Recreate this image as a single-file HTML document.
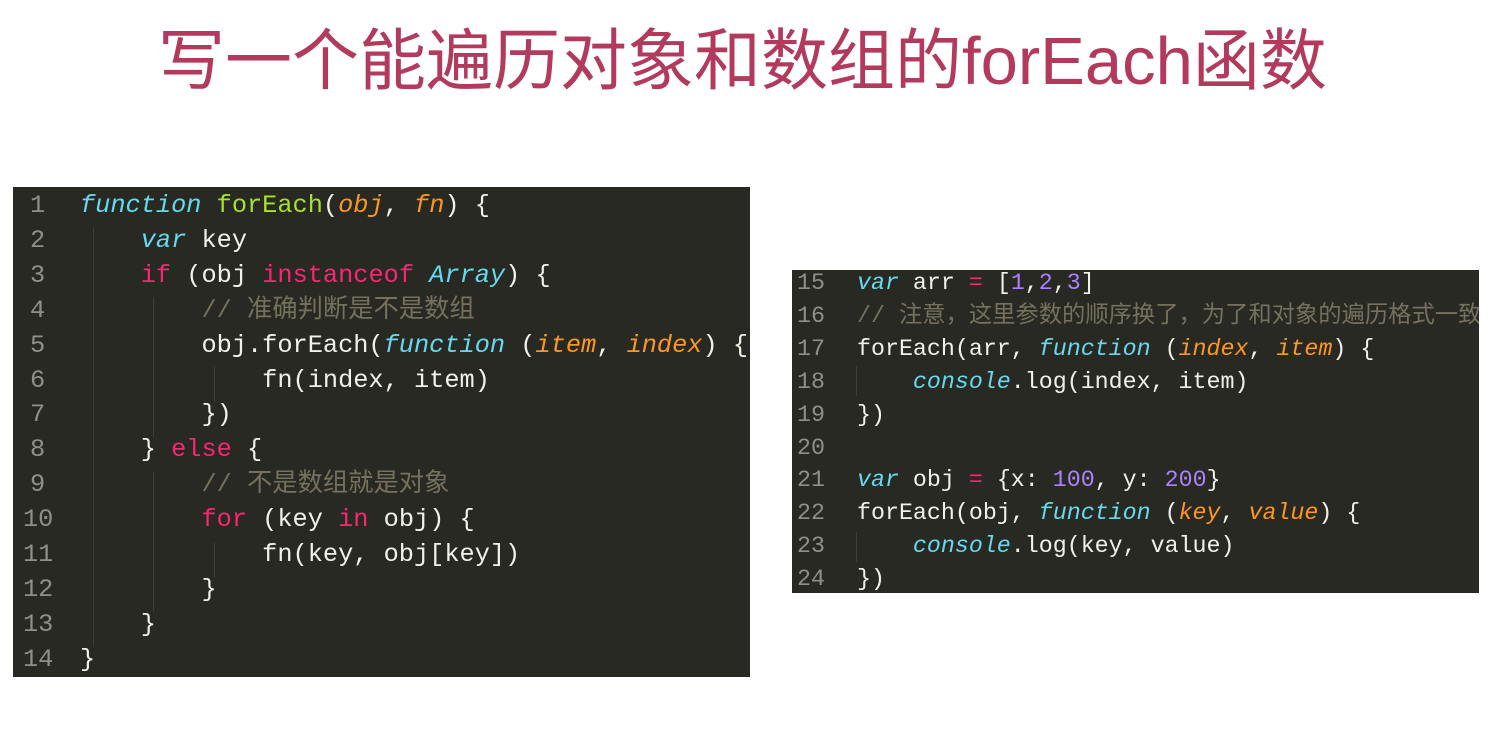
<!DOCTYPE html>
<html><head><meta charset="utf-8"><style>
body{margin:0;width:1504px;height:734px;background:#fff;position:relative;overflow:hidden}
.title{position:absolute;left:158px;top:22px;font-family:"Liberation Sans","Noto Sans CJK SC",sans-serif;font-size:67px;color:#b23a5c;line-height:80px;white-space:nowrap}
.p{position:absolute;background:#282923;font-family:"Liberation Mono","Noto Sans CJK SC",monospace;white-space:pre;color:#f1f1ea;overflow:hidden}
#a{left:13px;top:187px;width:737px;height:490px;font-size:25.3px}
#b{left:792px;top:270px;width:687px;height:323px;font-size:23.3px}
.n{position:absolute;color:#8f908a;height:34px;line-height:34px}
.k{color:#66d9ef;font-style:italic}.g{color:#a6e22e}.o{color:#fd971f;font-style:italic}.r{color:#f92672}.c{color:#75715e}.u{color:#ae81ff}
.gd{position:absolute;width:1px;background:#3d3e38}
</style></head><body>
<div class="title">写一个能遍历对象和数组的forEach函数</div>
<div class="p" id="a">
<div class="gd" style="left:80px;top:40px;height:420px"></div>
<div class="gd" style="left:140px;top:110px;height:140px"></div>
<div class="gd" style="left:140px;top:285px;height:140px"></div>
<div class="gd" style="left:201px;top:180px;height:35px"></div>
<div class="gd" style="left:201px;top:355px;height:35px"></div>
<div id="la"></div>
</div>
<div class="p" id="b"><div class="gd" style="left:64px;top:96px;height:30px"></div><div class="gd" style="left:64px;top:262px;height:30px"></div><div id="lb"></div></div>
<script>
var A=[
'<span class="k">function</span> <span class="g">forEach</span>(<span class="o">obj</span>, <span class="o">fn</span>) {',
'    <span class="k">var</span> key',
'    <span class="r">if</span> (obj <span class="r">instanceof</span> <span class="k">Array</span>) {',
'        <span class="c">// 准确判断是不是数组</span>',
'        obj.forEach(<span class="k">function</span> (<span class="o">item</span>, <span class="o">index</span>) {',
'            fn(index, item)',
'        })',
'    } <span class="r">else</span> {',
'        <span class="c">// 不是数组就是对象</span>',
'        <span class="r">for</span> (key <span class="r">in</span> obj) {',
'            fn(key, obj[key])',
'        }',
'    }',
'}'];
var B=[
'<span class="k">var</span> arr <span class="r">=</span> [<span class="u">1</span>,<span class="u">2</span>,<span class="u">3</span>]',
'<span class="c">// 注意，这里参数的顺序换了，为了和对象的遍历格式一致</span>',
'forEach(arr, <span class="k">function</span> (<span class="o">index</span>, <span class="o">item</span>) {',
'    <span class="k">console</span>.log(index, item)',
'})','',
'<span class="k">var</span> obj <span class="r">=</span> {x: <span class="u">100</span>, y: <span class="u">200</span>}',
'forEach(obj, <span class="k">function</span> (<span class="o">key</span>, <span class="o">value</span>) {',
'    <span class="k">console</span>.log(key, value)',
'})'];
var h='';A.forEach(function(s,i){var t=2+i*34.9;h+='<div class="n" style="left:'+(i<9?17:10)+'px;top:'+t+'px">'+(i+1)+'</div><div class="n" style="left:67px;top:'+t+'px;color:inherit">'+s+'</div>'});
document.getElementById('la').innerHTML=h;
h='';B.forEach(function(s,i){var t=-4+i*32.9;h+='<div class="n" style="left:5px;top:'+t+'px">'+(15+i)+'</div><div class="n" style="left:65px;top:'+t+'px;color:inherit">'+s+'</div>'});
document.getElementById('lb').innerHTML=h;
</script>
</body></html>
